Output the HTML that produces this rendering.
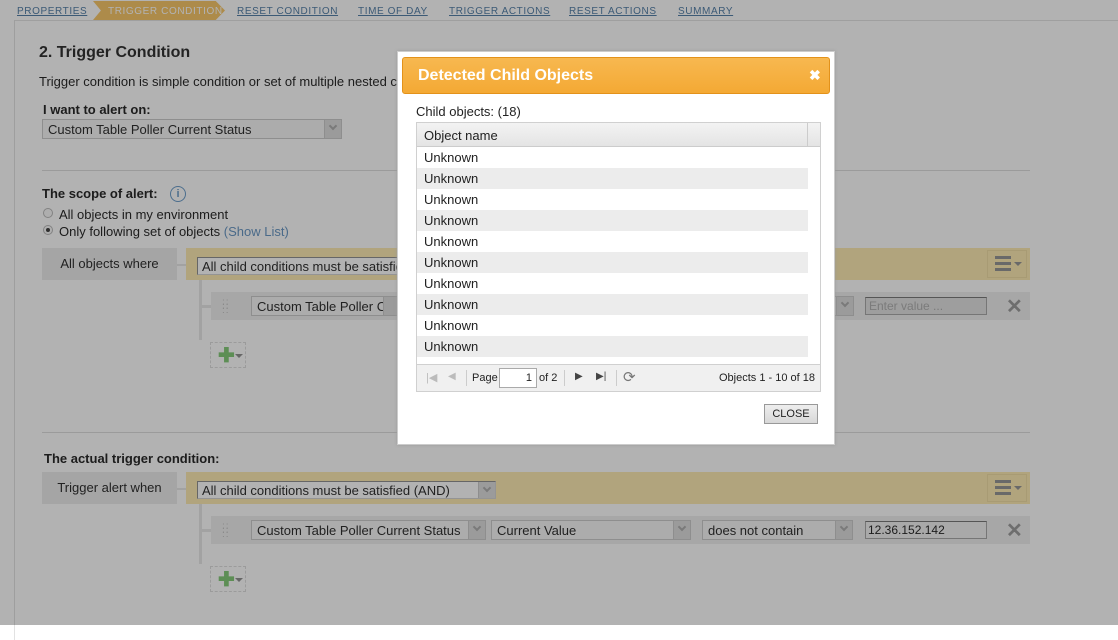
<!DOCTYPE html>
<html><head><meta charset="utf-8"><style>
*{margin:0;padding:0;box-sizing:border-box}
html,body{background:#fff}
body{width:1118px;height:625px;overflow:hidden;font-family:"Liberation Sans",Arial,sans-serif;color:#2a2a2a;position:relative;font-size:13px}
.a{position:absolute;white-space:nowrap}
.bc{font-size:10px;color:#5782aa;text-decoration:underline;letter-spacing:.6px;top:6px}
.sel{position:absolute;height:20px;border:1px solid #cccccc;background:#f7f7f7;font-size:13px;padding:2px 5px;color:#303030;overflow:hidden;white-space:nowrap}
.sel:after{content:"";position:absolute;right:0;top:0;width:16px;height:18px;background:#dedede;border-left:1px solid #ccc}
.sel i{position:absolute;right:5px;top:3px;width:6px;height:6px;border-right:2px solid #7a7a7a;border-bottom:2px solid #7a7a7a;transform:rotate(45deg);z-index:2}
.lbl{position:absolute;background:#ededed;font-size:13px;color:#303030;text-align:center;line-height:32px}
.beige{position:absolute;background:#feebb3;height:32px}
.row{position:absolute;background:#f0f0f0;height:28px}
.x{position:absolute;font-size:20px;font-weight:bold;color:#9e9e9e}
.menu{position:absolute;width:40px;height:28px;border:1px solid #f1dfa7}
.menu b{position:absolute;left:7px;width:16px;height:3px;background:#979797}
.add{position:absolute;width:36px;height:26px;border:1px dashed #dfdfdf}
.grip{position:absolute;color:#c2c2c2;font-size:10px;line-height:4px;letter-spacing:1px}
.m td{height:21px;padding-left:7px;font-size:13px;color:#222}
#ov{position:absolute;left:0;top:0;width:1118px;height:625px;background:rgba(0,0,0,.3)}
</style></head><body>
<div class="a bc" style="left:17px">PROPERTIES</div>
<div class="a" style="left:93px;top:1px;width:132px;height:19px;background:#f8c86b;clip-path:polygon(0 0,93% 0,100% 50%,93% 100%,0 100%,6% 50%)"></div>
<div class="a" style="left:108px;top:6px;font-size:10px;color:#fff;letter-spacing:.6px">TRIGGER CONDITION</div>
<div class="a bc" style="left:237px">RESET CONDITION</div>
<div class="a bc" style="left:358px">TIME OF DAY</div>
<div class="a bc" style="left:449px">TRIGGER ACTIONS</div>
<div class="a bc" style="left:569px">RESET ACTIONS</div>
<div class="a bc" style="left:678px">SUMMARY</div>
<div class="a" style="left:14px;top:20px;width:1110px;height:620px;border-left:1px solid #e2e2e2;border-top:1px solid #e4e4e4"></div>
<div class="a" style="left:39px;top:44px;font-size:16px;font-weight:bold;color:#333">2. Trigger Condition</div>
<div class="a" style="left:39px;top:74px;font-size:13px">Trigger condition is simple condition or set of multiple nested c</div>
<div class="a" style="left:43px;top:102px;font-weight:bold;font-size:13px">I want to alert on:</div>
<div class="sel" style="left:42px;top:119px;width:300px">Custom Table Poller Current Status<i></i></div>
<div class="a" style="left:42px;top:170px;width:988px;height:1px;background:#dfdfdf"></div>
<div class="a" style="left:42px;top:186px;font-weight:bold">The scope of alert:</div>
<div class="a" style="left:170px;top:186px;width:16px;height:16px;border:1px solid #6d9ecb;border-radius:50%;color:#6d9ecb;font-size:11px;font-weight:bold;text-align:center;line-height:14px">i</div>
<div class="a" style="left:43px;top:208px;width:10px;height:10px;border:1px solid #bbb;border-radius:50%;background:#fafafa"></div>
<div class="a" style="left:59px;top:207px">All objects in my environment</div>
<div class="a" style="left:43px;top:225px;width:10px;height:10px;border:1px solid #bbb;border-radius:50%;background:#fafafa"><div style="margin:2px;width:4px;height:4px;border-radius:50%;background:#444"></div></div>
<div class="a" style="left:59px;top:224px">Only following set of objects <span style="color:#6a98c5">(Show List)</span></div>

<div class="lbl" style="left:42px;top:248px;width:135px;height:32px">All objects where</div>
<div class="a" style="left:177px;top:264px;width:9px;height:2px;background:#e8e8e8"></div>
<div class="beige" style="left:186px;top:248px;width:844px"></div>
<div class="sel" style="left:197px;top:257px;width:220px;height:18px;padding:1px 4px;border-color:#929292 #d5d5d5 #d5d5d5 #929292;background:#fff">All child conditions must be satisfied (AND)</div>
<div class="menu" style="left:987px;top:250px"><b style="top:5px"></b><b style="top:11px"></b><b style="top:17px"></b><span style="position:absolute;left:26px;top:11px;border:4px solid transparent;border-top-color:#979797"></span></div>
<div class="a" style="left:199px;top:280px;width:3px;height:60px;background:#e8e8e8"></div>
<div class="a" style="left:202px;top:305px;width:9px;height:3px;background:#e8e8e8"></div>
<div class="row" style="left:211px;top:292px;width:819px"></div>
<div class="grip" style="left:222px;top:301px">::<br>::<br>::</div>
<div class="sel" style="left:251px;top:296px;width:150px">Custom Table Poller Current</div>
<div class="sel" style="left:834px;top:296px;width:20px"><i></i></div>
<div class="a" style="left:865px;top:297px;width:122px;height:18px;border:1px solid #aaa;border-top-color:#7a7a7a;background:#e2e2e2;color:#b0b0b0;font-size:12px;padding:1px 3px">Enter value ...</div>
<div class="x" style="left:1006px;top:294px">✕</div>
<div class="add" style="left:210px;top:342px"><span style="position:absolute;left:7px;top:5px;color:#86cc7a;font-size:20px;font-weight:bold;line-height:16px">✚</span><span style="position:absolute;left:24px;top:11px;border:4px solid transparent;border-top-color:#929292"></span></div>

<div class="a" style="left:42px;top:432px;width:988px;height:1px;background:#dfdfdf"></div>
<div class="a" style="left:44px;top:451px;font-weight:bold">The actual trigger condition:</div>
<div class="lbl" style="left:42px;top:472px;width:135px;height:32px">Trigger alert when</div>
<div class="a" style="left:177px;top:488px;width:9px;height:2px;background:#e8e8e8"></div>
<div class="beige" style="left:186px;top:472px;width:844px"></div>
<div class="sel" style="left:197px;top:481px;width:299px;height:18px;padding:1px 4px;border-color:#929292 #d5d5d5 #d5d5d5 #929292;background:#fff">All child conditions must be satisfied (AND)<i></i></div>
<div class="menu" style="left:987px;top:474px"><b style="top:5px"></b><b style="top:11px"></b><b style="top:17px"></b><span style="position:absolute;left:26px;top:11px;border:4px solid transparent;border-top-color:#979797"></span></div>
<div class="a" style="left:199px;top:504px;width:3px;height:60px;background:#e8e8e8"></div>
<div class="a" style="left:202px;top:529px;width:9px;height:3px;background:#e8e8e8"></div>
<div class="row" style="left:211px;top:516px;width:819px"></div>
<div class="grip" style="left:222px;top:525px">::<br>::<br>::</div>
<div class="sel" style="left:251px;top:520px;width:235px">Custom Table Poller Current Status<i></i></div>
<div class="sel" style="left:491px;top:520px;width:200px">Current Value<i></i></div>
<div class="sel" style="left:702px;top:520px;width:151px">does not contain<i></i></div>
<div class="a" style="left:865px;top:521px;width:122px;height:18px;border:1px solid #aaa;border-top-color:#7a7a7a;background:#f3f3f3;font-size:12px;padding:1px 2px">12.36.152.142</div>
<div class="x" style="left:1006px;top:518px">✕</div>
<div class="add" style="left:210px;top:566px"><span style="position:absolute;left:7px;top:5px;color:#86cc7a;font-size:20px;font-weight:bold;line-height:16px">✚</span><span style="position:absolute;left:24px;top:11px;border:4px solid transparent;border-top-color:#929292"></span></div>

<div id="ov"></div>

<!-- modal -->
<div class="a" style="left:397px;top:51px;width:438px;height:394px;background:#fff;border:1px solid #ccc;box-shadow:0 0 3px #999"></div>
<div class="a" style="left:402px;top:57px;width:428px;height:37px;border:1px solid #e3921a;border-radius:3px;background:linear-gradient(#f7b850,#f4a934)"></div>
<div class="a" style="left:418px;top:67px;font-size:16px;font-weight:bold;color:#fff">Detected Child Objects</div>
<div class="a" style="left:809px;top:67px;font-size:14px;font-weight:bold;color:#fff">✖</div>
<div class="a" style="left:416px;top:104px;font-size:13px;color:#222">Child objects: (18)</div>
<div class="a" style="left:416px;top:122px;width:405px;height:270px;border:1px solid #d0d0d0;background:#fff">
 <div style="height:24px;background:linear-gradient(#f3f3f3,#e4e4e4);border-bottom:1px solid #ccc;font-size:13px;padding:5px 7px;color:#222;position:relative">Object name<div style="position:absolute;left:390px;top:0;width:1px;height:23px;background:#ccc"></div></div>
 <table class="m" style="border-collapse:collapse;width:391px">
 <tr><td style="background:#fff">Unknown</td></tr><tr><td style="background:#ececec">Unknown</td></tr>
 <tr><td style="background:#fff">Unknown</td></tr><tr><td style="background:#ececec">Unknown</td></tr>
 <tr><td style="background:#fff">Unknown</td></tr><tr><td style="background:#ececec">Unknown</td></tr>
 <tr><td style="background:#fff">Unknown</td></tr><tr><td style="background:#ececec">Unknown</td></tr>
 <tr><td style="background:#fff">Unknown</td></tr><tr><td style="background:#ececec">Unknown</td></tr>
 </table>
 <div style="position:absolute;left:0;top:241px;width:403px;height:27px;background:#f0f0f0;border-top:1px solid #d0d0d0;font-size:11px;color:#222">
  <span class="a" style="left:9px;top:6px;color:#bbb;font-size:11px">|◀</span>
  <span class="a" style="left:31px;top:6px;color:#bbb;font-size:10px">◀</span>
  <span class="a" style="left:49px;top:5px;width:1px;height:16px;background:#ccc"></span>
  <span class="a" style="left:55px;top:7px">Page</span>
  <span class="a" style="left:82px;top:3px;width:38px;height:20px;border:1px solid #aaa;background:#fff;text-align:right;padding:3px 4px">1</span>
  <span class="a" style="left:122px;top:7px">of 2</span>
  <span class="a" style="left:147px;top:5px;width:1px;height:16px;background:#ccc"></span>
  <span class="a" style="left:158px;top:6px;color:#444;font-size:10px">▶</span>
  <span class="a" style="left:179px;top:6px;color:#444;font-size:10px">▶|</span>
  <span class="a" style="left:199px;top:5px;width:1px;height:16px;background:#ccc"></span>
  <span class="a" style="left:206px;top:3px;color:#777;font-size:15px">⟳</span>
  <span class="a" style="left:302px;top:7px">Objects 1 - 10 of 18</span>
 </div>
</div>
<div class="a" style="left:764px;top:404px;width:54px;height:20px;border:1px solid #999;background:linear-gradient(#eee,#d8d8d8);font-size:11px;text-align:center;line-height:18px;color:#222">CLOSE</div>
</body></html>
